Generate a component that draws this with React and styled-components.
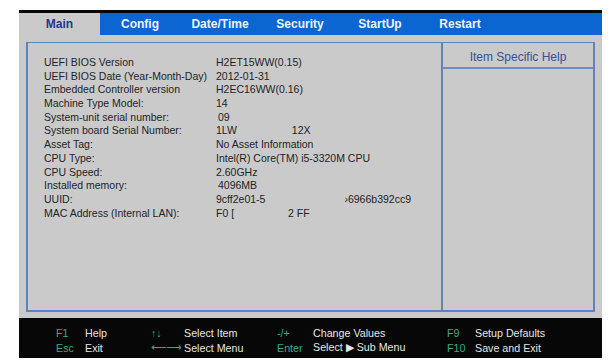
import React from "react";
import styled, { createGlobalStyle } from "styled-components";

const GlobalStyle = createGlobalStyle`
  html, body {
    margin: 0;
    padding: 0;
    background: #ffffff;
  }
  body {
    font-family: "Liberation Sans", Arial, sans-serif;
  }
`;

const tabs = ["Main", "Config", "Date/Time", "Security", "StartUp", "Restart"];

const info = [
  { label: "UEFI BIOS Version", value: "H2ET15WW(0.15)" },
  { label: "UEFI BIOS Date (Year-Month-Day)", value: "2012-01-31" },
  { label: "Embedded Controller version", value: "H2EC16WW(0.16)" },
  { label: "Machine Type Model:", value: "14" },
  { label: "System-unit serial number:", value: "09", shift: 2 },
  { label: "System board Serial Number:", value: "1LW", tail: "12X", gap: 55 },
  { label: "Asset Tag:", value: "No Asset Information" },
  { label: "CPU Type:", value: "Intel(R) Core(TM) i5-3320M CPU" },
  { label: "CPU Speed:", value: "2.60GHz" },
  { label: "Installed memory:", value: "4096MB", shift: 2 },
  { label: "UUID:", value: "9cff2e01-5", tail: "›6966b392cc9", gap: 79 },
  { label: "MAC Address (Internal LAN):", value: "F0 [", tail: "2 FF", gap: 54 },
];

const keys = [
  ["F1", "Help", "↑↓", "Select Item", "-/+", "Change Values", "F9", "Setup Defaults"],
  ["Esc", "Exit", "⟵⟶", "Select Menu", "Enter", "Select ▶ Sub Menu", "F10", "Save and Exit"],
];

const App = () => {
  return (
    <>
      <GlobalStyle />
      <Screen>
        <TopStrip />
        <TabBar>
          {tabs.map((t, i) => (
            <Tab key={t} active={i === 0}>
              {t}
            </Tab>
          ))}
        </TabBar>
        <Body>
          <Frame>
            <InfoPanel>
              {info.map((row) => (
                <Row key={row.label}>
                  <Label>{row.label}</Label>
                  <Value shift={row.shift}>
                    {row.value}
                    {row.tail && <Tail gap={row.gap}>{row.tail}</Tail>}
                  </Value>
                </Row>
              ))}
            </InfoPanel>
            <HelpPanel>
              <HelpTitle>Item Specific Help</HelpTitle>
            </HelpPanel>
          </Frame>
        </Body>
        <Footer>
          {keys.map((line, r) =>
            line.map((txt, c) =>
              c % 2 === 0 ? (
                <Key key={`${r}-${c}`}>{txt}</Key>
              ) : (
                <Desc key={`${r}-${c}`}>{txt}</Desc>
              )
            )
          )}
        </Footer>
      </Screen>
    </>
  );
};
export default App;

const Screen = styled.div`
  width: 583px;
  margin: 10px 0 0 19px;
  display: flex;
  flex-direction: column;
`;

const TopStrip = styled.div`
  height: 3px;
  background: #060606;
`;

const TabBar = styled.div`
  height: 22px;
  display: flex;
  background: #0b66d2;
`;

const Tab = styled.div`
  width: 80px;
  display: flex;
  align-items: center;
  justify-content: center;
  font-size: 12px;
  font-weight: bold;
  color: ${(props) => (props.active ? "#23388c" : "#eef3ff")};
  background: ${(props) => (props.active ? "#cacaca" : "transparent")};
  &:first-child {
    width: 81px;
  }
`;

const Body = styled.div`
  height: 283px;
  box-sizing: border-box;
  padding: 7px 7px 6px 7px;
  background: #cacaca;
`;

const Frame = styled.div`
  height: 100%;
  box-sizing: border-box;
  display: grid;
  grid-template-columns: 413px 1fr;
  border: 2px solid #5f84bd;
  border-top-width: 1px;
`;

const InfoPanel = styled.div`
  padding: 13px 0 0 16px;
  display: flex;
  flex-direction: column;
`;

const Row = styled.div`
  display: flex;
  height: 13.7px;
  line-height: 13.7px;
  font-size: 10.5px;
  color: #222426;
`;

const Label = styled.div`
  width: 172px;
  white-space: nowrap;
`;

const Value = styled.div`
  padding-left: ${(props) => props.shift || 0}px;
  white-space: nowrap;
`;

const Tail = styled.span`
  margin-left: ${(props) => props.gap}px;
`;

const HelpPanel = styled.div`
  border-left: 2px solid #5f84bd;
  display: flex;
  flex-direction: column;
`;

const HelpTitle = styled.div`
  height: 26px;
  box-sizing: border-box;
  padding-top: 7px;
  border-bottom: 2px solid #6b8ec4;
  text-align: center;
  font-size: 12px;
  color: #34509e;
`;

const Footer = styled.div`
  height: 40px;
  box-sizing: border-box;
  padding: 7px 0 0 37px;
  background: #070707;
  display: grid;
  grid-template-columns: 29px 66px 33px 93px 36px 134px 28px 1fr;
  grid-auto-rows: 15px;
  align-items: center;
  font-size: 10.7px;
  white-space: nowrap;
`;

const Key = styled.div`
  color: #33ad85;
  font-family: "Liberation Sans", "DejaVu Sans", sans-serif;
`;

const Desc = styled.div`
  color: #e6e6e6;
`;
